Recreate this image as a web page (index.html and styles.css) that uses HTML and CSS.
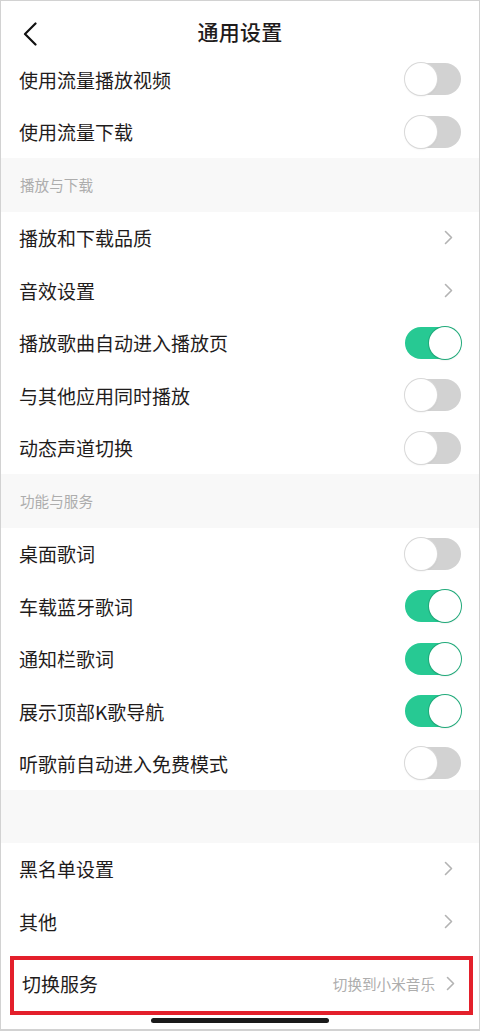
FILE: index.html
```html
<!DOCTYPE html>
<html lang="zh-CN">
<head>
  <meta charset="UTF-8" />
  <meta name="viewport" content="width=device-width, initial-scale=1.0"/>
  <title>通用设置</title>
  <link rel="stylesheet" href="styles.css">
</head>
<body>
  <div class="screen">

    <header class="topbar">
      <span class="back">
        <svg width="14" height="24" viewBox="0 0 14 24"><polyline points="12.5,1.5 2,12 12.5,22.5" fill="none" stroke="#111" stroke-width="2.2" stroke-linecap="round" stroke-linejoin="round"/></svg>
      </span>
      <h1>通用设置</h1>
    </header>

    <div class="row"><span class="label">使用流量播放视频</span><span class="switch"></span></div>
    <div class="row"><span class="label">使用流量下载</span><span class="switch"></span></div>

    <div class="section">播放与下载</div>
    <div class="row"><span class="label">播放和下载品质</span><span class="chev"></span></div>
    <div class="row"><span class="label">音效设置</span><span class="chev"></span></div>
    <div class="row"><span class="label">播放歌曲自动进入播放页</span><span class="switch on"></span></div>
    <div class="row"><span class="label">与其他应用同时播放</span><span class="switch"></span></div>
    <div class="row"><span class="label">动态声道切换</span><span class="switch"></span></div>

    <div class="section">功能与服务</div>
    <div class="row"><span class="label">桌面歌词</span><span class="switch"></span></div>
    <div class="row"><span class="label">车载蓝牙歌词</span><span class="switch on"></span></div>
    <div class="row"><span class="label">通知栏歌词</span><span class="switch on"></span></div>
    <div class="row"><span class="label">展示顶部K歌导航</span><span class="switch on"></span></div>
    <div class="row"><span class="label">听歌前自动进入免费模式</span><span class="switch"></span></div>

    <div class="section blank"></div>
    <div class="row"><span class="label">黑名单设置</span><span class="chev"></span></div>
    <div class="row"><span class="label">其他</span><span class="chev"></span></div>

    <div class="highlight">
      <div class="row inner">
        <span class="label">切换服务</span>
        <span class="extra">切换到小米音乐</span>
        <span class="chev"></span>
      </div>
    </div>

    <div class="home-bar"></div>
  </div>

  <script>
    // chevron icon for every navigable row
    const chevSvg = '<svg width="9" height="15" viewBox="0 0 9 15"><polyline points="1.5,1.5 7.5,7.5 1.5,13.5" fill="none" stroke="#b3b3b3" stroke-width="1.6" stroke-linecap="round" stroke-linejoin="round"/></svg>';
    document.querySelectorAll('.chev').forEach(el => el.innerHTML = chevSvg);
  </script>
</body>
</html>
```

FILE: styles.css
```css
:root {
  --text: #1f1c1c;
  --muted: #adadad;
  --section-bg: #f8f8f8;
  --green: #27c993;
  --off: #d2d2d2;
  --red: #e3202b;
}

* {
  box-sizing: border-box;
}

html, body {
  margin: 0;
  background: #fff;
}

body {
  font-family: "Noto Sans CJK SC", "Noto Sans", sans-serif;
  color: var(--text);
}

.screen {
  width: 480px;
  height: 1031px;
  border: 1px solid #d2d2d2;
  border-bottom-width: 2px;
  overflow: hidden;
  display: flex;
  flex-direction: column;
}

.topbar {
  height: 52px;
  padding-top: 8px;
  display: flex;
  align-items: center;
  justify-content: center;
  position: relative;
  flex-shrink: 0;
}

.topbar .back {
  position: absolute;
  left: 22px;
  top: 21px;
  display: flex;
}

.topbar h1 {
  margin: 0;
  font-size: 21px;
  font-weight: 500;
  line-height: 42px;
  letter-spacing: 0.3px;
}

.row {
  height: 52.4px;
  flex-shrink: 0;
  display: flex;
  align-items: center;
  padding: 0 18px 0 18px;
}

.label {
  flex: 1;
  font-size: 19px;
  line-height: 1;
}

.extra {
  font-size: 14.6px;
  color: var(--muted);
  margin-right: 11px;
}

.chev {
  display: flex;
  margin-right: 8px;
}

.switch {
  width: 56px;
  height: 32px;
  border-radius: 16px;
  background: var(--off);
  position: relative;
}

.switch::after {
  content: "";
  position: absolute;
  left: 0;
  top: 0;
  width: 32px;
  height: 32px;
  border-radius: 50%;
  background: #fff;
  box-shadow: 0 0 0 1px #d8d8d8, 0 1px 2px rgba(0, 0, 0, 0.12);
}

.switch.on {
  background: var(--green);
}

.switch.on::after {
  left: 24px;
  box-shadow: 0 0 0 1px #1fa979, 0 1px 2px rgba(0, 0, 0, 0.15);
}

.section {
  height: 54px;
  flex-shrink: 0;
  background: var(--section-bg);
  display: flex;
  align-items: center;
  padding-left: 19px;
  font-size: 14.6px;
  color: var(--muted);
}

.section.blank {
  height: 53px;
}

.highlight {
  margin: 9px 6px 0 9px;
  height: 59px;
  border: 4.5px solid var(--red);
  flex-shrink: 0;
}

.row.inner {
  height: 46px;
  padding: 0 14px 0 8px;
}

.row.inner .chev {
  margin-right: 0;
}

.home-bar {
  width: 178px;
  height: 5px;
  border-radius: 3px;
  background: #1a1a1a;
  margin: 3px auto 0 150px;
}
```
